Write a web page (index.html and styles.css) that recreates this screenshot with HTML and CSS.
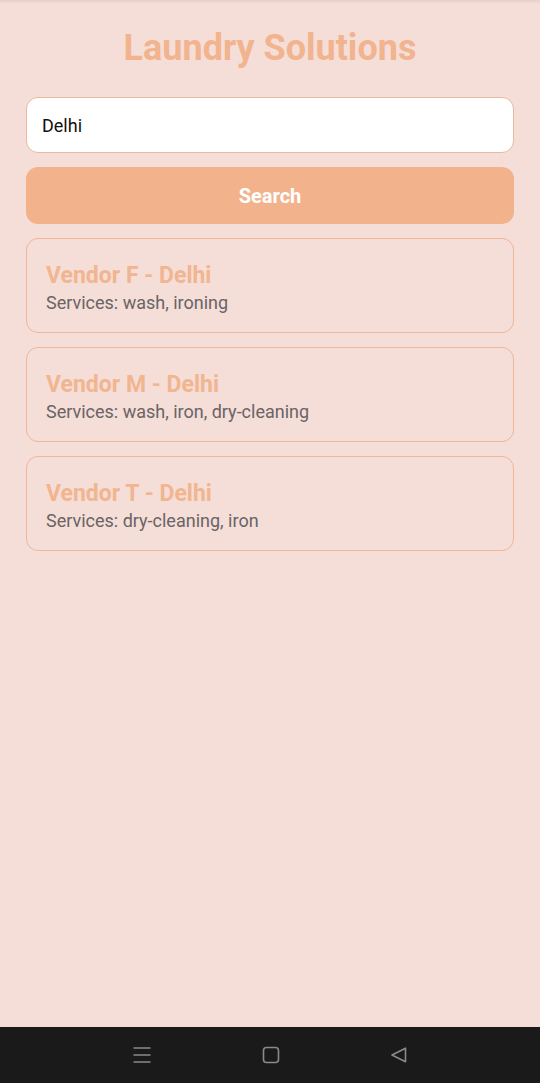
FILE: index.html
```html
<!DOCTYPE html>
<html>
<head>
<meta charset="utf-8">
<link rel="stylesheet" href="styles.css">
</head>
<body>
<div class="screen">
  <main class="content">
    <h1 class="title">Laundry Solutions</h1>
    <div class="search-input">Delhi</div>
    <button class="search-btn">Search</button>
    <div class="list">
      <div class="card">
        <div class="card-title">Vendor F - Delhi</div>
        <div class="card-sub">Services: wash, ironing</div>
      </div>
      <div class="card">
        <div class="card-title">Vendor M - Delhi</div>
        <div class="card-sub">Services: wash, iron, dry-cleaning</div>
      </div>
      <div class="card">
        <div class="card-title">Vendor T - Delhi</div>
        <div class="card-sub">Services: dry-cleaning, iron</div>
      </div>
    </div>
  </main>
  <nav class="navbar">
    <svg class="nav-icon" width="20" height="18" viewBox="0 0 20 18"><path d="M1.5 2h17M1.5 9h17M1.5 16h17" stroke="#8a8a8a" stroke-width="1.6" fill="none"/></svg>
    <svg class="nav-icon" width="18" height="18" viewBox="0 0 18 18"><rect x="1.5" y="1.5" width="15" height="15" rx="3" stroke="#8a8a8a" stroke-width="1.6" fill="none"/></svg>
    <svg class="nav-icon" width="18" height="18" viewBox="0 0 18 18"><path d="M2 9 L15.5 2.2 L15.5 15.8 Z" stroke="#8a8a8a" stroke-width="1.6" stroke-linejoin="round" fill="none"/></svg>
  </nav>
</div>
</body>
</html>
```
FILE: styles.css
```css
html, body {
  margin: 0;
  padding: 0;
}
body {
  background: #f5ddd8;
  font-family: Roboto, "Liberation Sans", sans-serif;
}
.screen {
  display: flex;
  flex-direction: column;
  min-height: 1083px;
  background: linear-gradient(to bottom, #e6d0cb 0, #f5ddd8 4px);
}
.content {
  flex: 1;
  display: flex;
  flex-direction: column;
  padding: 27px 26px 0;
}
.title {
  margin: 0;
  text-align: center;
  font-size: 36px;
  line-height: 42px;
  font-weight: 700;
  color: #f1b48e;
}
.search-input {
  margin-top: 28px;
  height: 56px;
  box-sizing: border-box;
  display: flex;
  align-items: center;
  padding: 0 15px;
  background: #ffffff;
  border: 1px solid #e9b89e;
  border-radius: 12px;
  font-size: 18px;
  color: #111111;
}
.search-btn {
  margin-top: 14px;
  height: 57px;
  border: none;
  border-radius: 12px;
  background: #f2b28c;
  color: #ffffff;
  font-family: Roboto, "Liberation Sans", sans-serif;
  font-size: 20px;
  font-weight: 700;
  padding: 0;
}
.list {
  margin-top: 14px;
  display: flex;
  flex-direction: column;
  gap: 14px;
}
.card {
  border: 1px solid #efb797;
  border-radius: 12px;
  padding: 23px 19px 19px;
  display: flex;
  flex-direction: column;
  gap: 3px;
}
.card-title {
  font-size: 23px;
  line-height: 27px;
  font-weight: 700;
  color: #f1b58f;
}
.card-sub {
  font-size: 18px;
  line-height: 21px;
  color: #6a6464;
}
.navbar {
  height: 56px;
  background: #1a1a1a;
  display: flex;
  align-items: center;
  justify-content: center;
  gap: 110px;
}
.nav-icon {
  display: block;
}
```
